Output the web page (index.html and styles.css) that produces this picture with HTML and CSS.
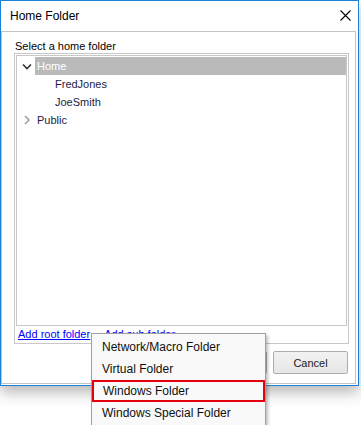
FILE: index.html
```html
<!DOCTYPE html>
<html lang="en">
<head>
    <meta charset="UTF-8">
    <meta name="viewport" content="width=device-width, initial-scale=1.0">
    <title>Home Folder</title>
    <link rel="stylesheet" href="styles.css">
</head>
<body>
    <div class="window">
        <div class="titlebar">
            <span class="title">Home Folder</span>
            <svg class="close" width="11" height="11" viewBox="0 0 11 11">
                <path d="M0.5 0.5 L10.5 10.5 M10.5 0.5 L0.5 10.5" stroke="#000" stroke-width="1.1" fill="none"/>
            </svg>
        </div>
        <div class="panel">
            <div class="label">Select a home folder</div>
            <div class="group">
                <ul class="tree">
                    <li class="row">
                        <span class="twist">
                            <svg width="10" height="7" viewBox="0 0 10 7"><path d="M1 1.5 L5 5.5 L9 1.5" stroke="#333" stroke-width="1.6" fill="none"/></svg>
                        </span>
                        <span class="name selected">Home</span>
                    </li>
                    <li class="row child"><span class="twist"></span><span class="name">FredJones</span></li>
                    <li class="row child"><span class="twist"></span><span class="name">JoeSmith</span></li>
                    <li class="row">
                        <span class="twist">
                            <svg width="7" height="10" viewBox="0 0 7 10"><path d="M2 1 L6 5 L2 9" stroke="#9a9a9a" stroke-width="1.5" fill="none"/></svg>
                        </span>
                        <span class="name">Public</span>
                    </li>
                </ul>
                <div class="links">
                    <a href="#">Add root folder</a>
                    <a href="#">Add sub folder</a>
                </div>
            </div>
            <div class="buttons">
                <button class="btn">OK</button>
                <button class="btn">Cancel</button>
            </div>
        </div>

        <ul class="menu">
            <li>Network/Macro Folder</li>
            <li>Virtual Folder</li>
            <li class="marked">Windows Folder</li>
            <li>Windows Special Folder</li>
        </ul>
    </div>
</body>
</html>
```

FILE: styles.css
```css
*{margin:0; padding:0; box-sizing:border-box;}
li{list-style:none;}
html, body{height:100%;}
body{
    min-height:425px;
    background:#fff;
    font-family:"Liberation Sans", Arial, sans-serif;
    font-size:11px;
    color:#000;
}

.window{
    position:relative;
    width:359px;
    height:386px;
    border:1px solid #1a80d9;
    background:#fff;
    display:flex;
    flex-direction:column;
    box-shadow:0 6px 14px rgba(0,0,0,0.3);
}

.titlebar{
    height:30px;
    display:flex;
    align-items:center;
    justify-content:space-between;
    padding:0 7px 0 9px;
}
.title{font-size:12px; color:#000;}
.close{margin-top:-2px;}

.panel{
    flex:1;
    border:1px solid #c4c4c4;
    margin:0 2px 1px 0;
    padding:0 6px 0 12px;
}
.label{
    padding:7px 0 0 1px;
    line-height:14px;
    height:21px;
    color:#000;
}

.group{
    border:1px solid #c8c8c8;
    padding:0 1px;
}
.tree{
    margin-top:1px;
    height:271px;
    border:1px solid #c8c8c8;
    padding-top:1px;
}
.row{
    display:flex;
    height:18px;
    line-height:18px;
}
.twist{
    width:18px;
    display:flex;
    align-items:center;
    justify-content:center;
    padding-left:1px;
}
.child .twist{width:36px;}
.name{
    padding:0 2px;
    color:#1c1c48;
}
.selected{
    flex:1;
    background:#bababa;
    color:#fff;
}

.links{
    height:17px;
    line-height:17px;
    padding-left:2px;
    display:flex;
    gap:14px;
}
.links a{color:#0000ff;}

.buttons{
    display:flex;
    justify-content:flex-end;
    gap:6px;
    margin:7px 1px 0 0;
}
.btn{
    width:75px;
    height:23px;
    border:1px solid #adadad;
    border-radius:2px;
    background:linear-gradient(#f2f2f2, #e6e6e6);
    font-family:"Liberation Sans", Arial, sans-serif;
    font-size:11px;
    color:#1a1a1a;
}

.menu{
    position:absolute;
    left:90px;
    top:332px;
    width:175px;
    background:#f9f9f9;
    border:1px solid #a0a0a0;
    padding:2px 0;
    box-shadow:2px 2px 3px rgba(0,0,0,0.25);
    font-size:12px;
}
.menu li{
    height:22px;
    line-height:22px;
    padding-left:10px;
    color:#101010;
}
.menu li.marked{
    border:2px solid #e4000f;
    line-height:18px;
    padding-left:9px;
}
```
